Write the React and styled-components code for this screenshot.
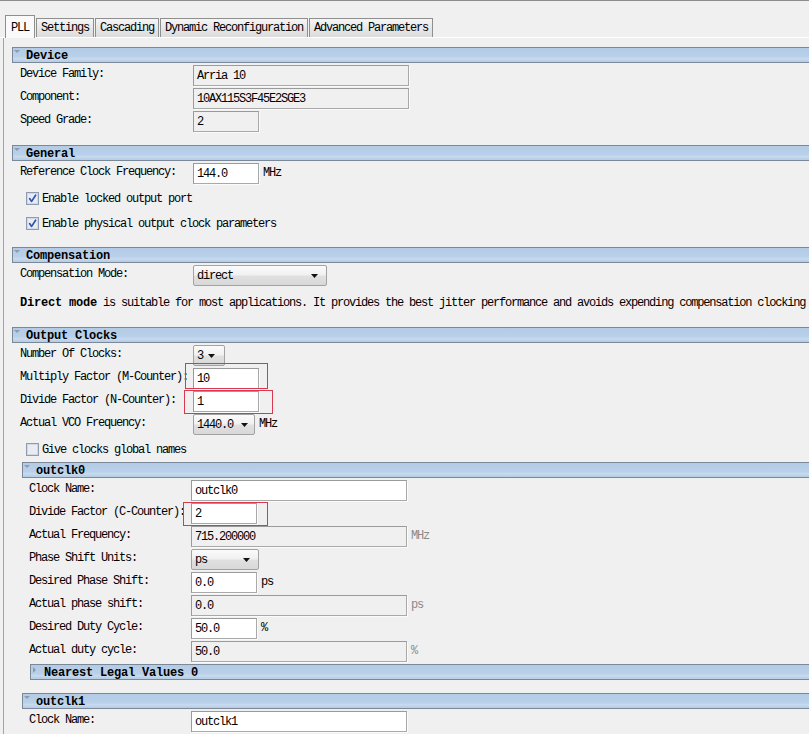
import React, { createContext, useContext } from 'react';
import styled, { createGlobalStyle, css } from 'styled-components';

const FIELD_X = 193;
const XCtx = createContext(12);

const Global = createGlobalStyle`
  html, body { margin: 0; padding: 0; background: #f0f0f0; }
  body { width: 809px; height: 734px; overflow: hidden; }
`;

const Page = styled.div`
  width: 809px;
  height: 734px;
  overflow: hidden;
  box-sizing: border-box;
  background: #f0f0f0;
  border-top: 1px solid #8c8c8c;
  font-family: "Liberation Mono", "DejaVu Sans Mono", monospace;
  font-size: 12px;
  letter-spacing: -1.2px;
  color: #000;
`;

const TabStrip = styled.div`
  display: flex;
  align-items: flex-end;
  gap: 1px;
  height: 37px;
  box-sizing: border-box;
  padding-left: 5px;
  border-bottom: 1px solid #ffffff;
`;

const Tab = styled.div`
  flex: none;
  box-sizing: border-box;
  border: 1px solid #8f8f8f;
  border-bottom: none;
  white-space: nowrap;
  ${p => p.$active ? css`
    height: 23px;
    line-height: 24px;
    padding: 0 5px;
    margin-bottom: -1px;
    background: #fafafa;
  ` : css`
    height: 19px;
    line-height: 19px;
    padding: 0 4px;
    background: linear-gradient(#f5f5f5, #e6e6e6 55%, #dcdcdc);
  `}
`;

const Pane = styled.div`
  margin-left: 3px;
  border-left: 1px solid #a3a3a3;
  padding: 9px 0 0 8px;
`;

const HeaderBar = styled.div`
  position: relative;
  height: 12px;
  padding: 2px 0 0 13px;
  margin-left: ${p => p.$ml}px;
  border: 1px solid #7b8898;
  border-right: none;
  background: linear-gradient(to bottom, #b3cbe4 0%, #b8d0e9 60%, #cadbed 78%, #bed3ea 86%, #b5cde6 100%);
  font-weight: bold;
  letter-spacing: -0.2px;
  line-height: 13px;
  white-space: nowrap;
  &::before {
    content: "";
    position: absolute;
    ${p => p.$collapsed ? css`
      left: 2px; top: 2px;
      border-top: 3px solid transparent;
      border-bottom: 3px solid transparent;
      border-left: 3px solid #8c9bb0;
    ` : css`
      left: 1px; top: 2px;
      border-left: 3px solid transparent;
      border-right: 3px solid transparent;
      border-top: 3px solid #8c9bb0;
    `}
  }
`;

const Body = styled.div`
  padding: 2px 0 ${p => p.$pb}px ${p => p.$pl}px;
`;

const GroupBox = styled.div`
  margin-bottom: ${p => p.$mb}px;
`;

function Group({ title, left, labelX, collapsed, pb = 11, mb = 0, children }) {
  const parentX = useContext(XCtx);
  return (
    <GroupBox $mb={mb}>
      <HeaderBar $ml={left - parentX} $collapsed={collapsed}>{title}</HeaderBar>
      {!collapsed && (
        <XCtx.Provider value={labelX}>
          <Body $pl={labelX - left} $pb={pb}>{children}</Body>
        </XCtx.Provider>
      )}
    </GroupBox>
  );
}

const RowBox = styled.div`
  display: flex;
  align-items: flex-start;
  height: 23px;
`;

const Label = styled.div`
  flex: none;
  width: ${p => p.$w}px;
  padding-top: 1px;
  line-height: 16px;
  white-space: nowrap;
`;

function Row({ label, children }) {
  const x = useContext(XCtx);
  return (
    <RowBox>
      <Label $w={FIELD_X - x}>{label}</Label>
      {children}
    </RowBox>
  );
}

const Field = styled.div`
  flex: none;
  box-sizing: border-box;
  width: ${p => p.$w}px;
  height: 21px;
  padding: 2px 3px 0;
  line-height: 17px;
  white-space: nowrap;
  border: 1px solid #a9a9a9;
  border-top-color: #9a9a9a;
  border-left-color: #9a9a9a;
  background: ${p => p.$ro ? '#f0f0f0' : '#ffffff'};
  box-shadow: 1px 1px 0 #fbfbfb;
`;

const Unit = styled.span`
  margin-left: 4px;
  line-height: 21px;
  color: ${p => p.$dim ? '#8a8a8a' : '#000'};
`;

const SelectBox = styled.div`
  flex: none;
  box-sizing: border-box;
  width: ${p => p.$w}px;
  height: 21px;
  display: flex;
  align-items: center;
  justify-content: space-between;
  padding: 1px ${p => p.$pr}px 0 3px;
  border: 1px solid #a2a2a2;
  border-radius: 2px;
  background: linear-gradient(#fbfbfb, #f1f1f1 45%, #e0e0e0 55%, #d8d8d8);
  white-space: nowrap;
`;

const Arrow = () => (
  <svg width="7" height="4" viewBox="0 0 7 4">
    <polygon points="0,0 7,0 3.5,4" fill="#111" />
  </svg>
);

function Select({ w, pr = 7, children }) {
  return (
    <SelectBox $w={w} $pr={pr}>
      <span>{children}</span>
      <Arrow />
    </SelectBox>
  );
}

const MarkWrap = styled.div`
  position: relative;
  flex: none;
`;

const Mark = styled.div`
  position: absolute;
  z-index: 2;
  top: ${p => p.$t}px;
  left: ${p => p.$l}px;
  width: ${p => p.$w}px;
  height: ${p => p.$h}px;
  box-sizing: border-box;
  border: 1px solid #d8394e;
  pointer-events: none;
`;

const CheckRowBox = styled.div`
  display: flex;
  align-items: center;
  gap: 3px;
  height: 25px;
  padding-left: 6px;
  white-space: nowrap;
`;

function Check({ checked, children }) {
  return (
    <CheckRowBox>
      <svg width="13" height="13" viewBox="0 0 13 13">
        <rect x="0.5" y="0.5" width="12" height="12" fill="#ffffff" stroke="#8e9bb0" />
        <rect x="1.5" y="1.5" width="10" height="10" fill="#e9edf3" stroke="#d3d9e2" />
        {checked && (
          <path d="M3.6 6.6 L5.6 9.4 L9.6 3.2" stroke="#2a55b5" strokeWidth="1.7" fill="none" strokeLinecap="round" strokeLinejoin="round" />
        )}
      </svg>
      <span>{children}</span>
    </CheckRowBox>
  );
}

const Desc = styled.div`
  padding: 8px 0 6px;
  line-height: 14px;
  white-space: nowrap;
`;

const Strong = styled.b`
  letter-spacing: -0.2px;
`;

export default function App() {
  return (
    <Page>
      <Global />
      <TabStrip>
        <Tab $active>PLL</Tab>
        <Tab>Settings</Tab>
        <Tab>Cascading</Tab>
        <Tab>Dynamic Reconfiguration</Tab>
        <Tab>Advanced Parameters</Tab>
      </TabStrip>
      <Pane>
        <Group title="Device" left={12} labelX={20}>
          <Row label="Device Family:"><Field $ro $w={216}>Arria 10</Field></Row>
          <Row label="Component:"><Field $ro $w={216}>10AX115S3F45E2SGE3</Field></Row>
          <Row label="Speed Grade:"><Field $ro $w={66}>2</Field></Row>
        </Group>
        <Group title="General" left={12} labelX={20}>
          <Row label="Reference Clock Frequency:"><Field $w={66}>144.0</Field><Unit>MHz</Unit></Row>
          <Check checked>Enable locked output port</Check>
          <Check checked>Enable physical output clock parameters</Check>
        </Group>
        <Group title="Compensation" left={12} labelX={20}>
          <Row label="Compensation Mode:"><Select w={134} pr={8}>direct</Select></Row>
          <Desc>
            <Strong>Direct mode</Strong> is suitable for most applications. It provides the best jitter performance and avoids expending compensation clocking
          </Desc>
        </Group>
        <Group title="Output Clocks" left={12} labelX={20}>
          <Row label="Number Of Clocks:"><Select w={32} pr={9}>3</Select></Row>
          <Row label="Multiply Factor (M-Counter):">
            <MarkWrap>
              <Field $w={66}>10</Field>
              <Mark $t={-5} $l={-8} $w={83} $h={26} />
            </MarkWrap>
          </Row>
          <Row label="Divide Factor (N-Counter):">
            <MarkWrap>
              <Field $w={66}>1</Field>
              <Mark $t={-1} $l={-9} $w={89} $h={24} />
            </MarkWrap>
          </Row>
          <Row label="Actual VCO Frequency:"><Select w={62} pr={6}>1440.0</Select><Unit>MHz</Unit></Row>
          <Check>Give clocks global names</Check>
          <Group title="outclk0" left={22} labelX={31} pb={11}>
            <Row label="Clock Name:"><Field $w={216}>outclk0</Field></Row>
            <Row label="Divide Factor (C-Counter):">
              <MarkWrap>
                <Field $w={66}>2</Field>
                <Mark $t={-1} $l={-8} $w={85} $h={24} />
              </MarkWrap>
            </Row>
            <Row label="Actual Frequency:"><Field $ro $w={216}>715.200000</Field><Unit $dim>MHz</Unit></Row>
            <Row label="Phase Shift Units:"><Select w={68} pr={8}>ps</Select></Row>
            <Row label="Desired Phase Shift:"><Field $w={66}>0.0</Field><Unit>ps</Unit></Row>
            <Row label="Actual phase shift:"><Field $ro $w={216}>0.0</Field><Unit $dim>ps</Unit></Row>
            <Row label="Desired Duty Cycle:"><Field $w={66}>50.0</Field><Unit>%</Unit></Row>
            <Row label="Actual duty cycle:"><Field $ro $w={216}>50.0</Field><Unit $dim>%</Unit></Row>
            <Group title="Nearest Legal Values 0" left={32} labelX={40} collapsed mb={2} />
          </Group>
          <Group title="outclk1" left={22} labelX={31}>
            <Row label="Clock Name:"><Field $w={216}>outclk1</Field></Row>
          </Group>
        </Group>
      </Pane>
    </Page>
  );
}
